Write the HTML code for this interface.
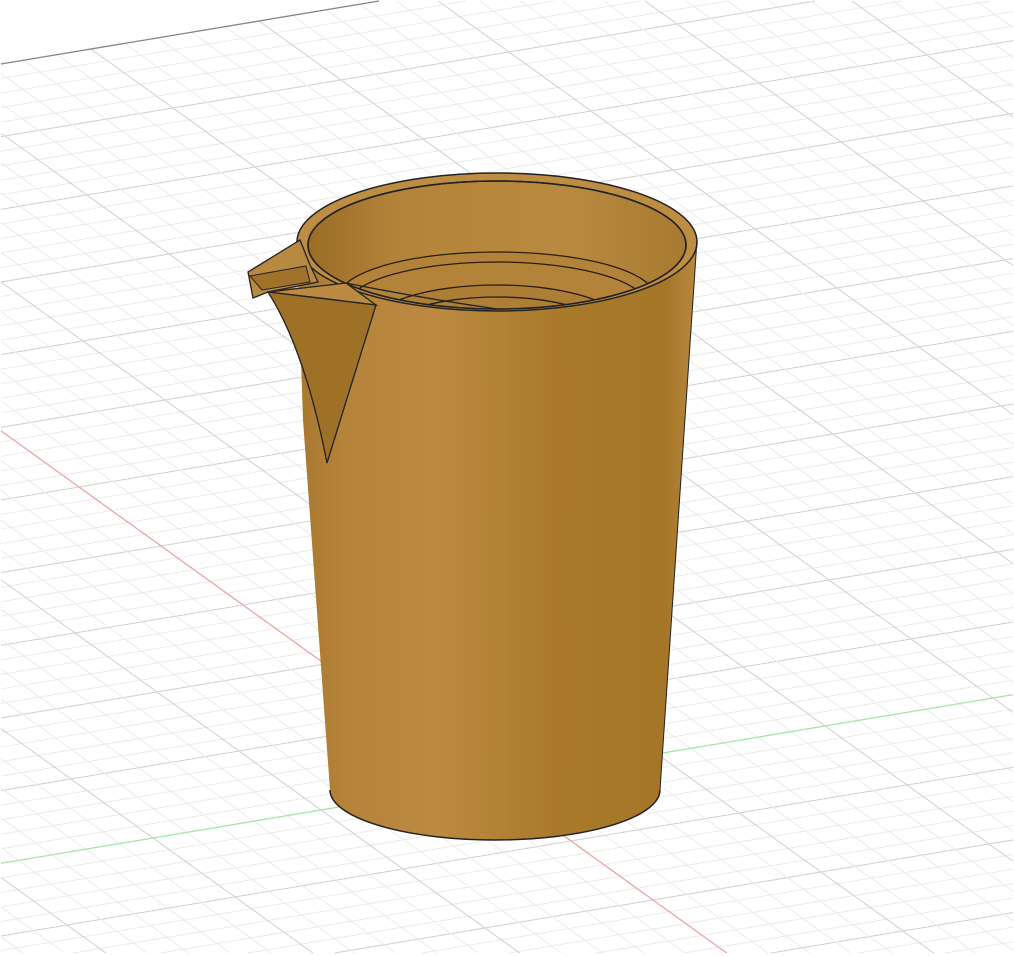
<!DOCTYPE html>
<html><head><meta charset="utf-8"><style>
html,body{margin:0;padding:0;background:#fff;width:1014px;height:956px;overflow:hidden}
svg{display:block;position:absolute;left:0;top:0;overflow:hidden}
</style></head><body>
<svg id="s" width="1014" height="956" viewBox="0 0 1014 956" xmlns="http://www.w3.org/2000/svg">
<defs>
<linearGradient id="body" x1="0" x2="1" y1="0" y2="0">
<stop offset="0" stop-color="#a8782e"/>
<stop offset="0.12" stop-color="#b5843a"/>
<stop offset="0.35" stop-color="#bb8a40"/>
<stop offset="0.65" stop-color="#aa7a2a"/>
<stop offset="0.92" stop-color="#a57628"/>
<stop offset="1" stop-color="#b8883e"/>
</linearGradient>
<linearGradient id="inner" x1="0" x2="1">
<stop offset="0" stop-color="#9a6d25"/>
<stop offset="0.25" stop-color="#b4843a"/>
<stop offset="0.7" stop-color="#b88a40"/>
<stop offset="1" stop-color="#a87a30"/>
</linearGradient>
<clipPath id="ic"><ellipse cx="497" cy="245" rx="189" ry="64"/></clipPath>
</defs>
<g id="grid"></g>
<path d="M297,240 L303,420 L330,790 A165,50 0 0 0 660,790 L697,240 Z" fill="url(#body)"/>
<path d="M330,790 A165,50 0 0 0 660,790" fill="none" stroke="#222" stroke-width="1.5"/>
<ellipse cx="497" cy="242" rx="200" ry="69" fill="#bd8d42" stroke="#222" stroke-width="1.5"/>
<ellipse cx="497" cy="245" rx="189" ry="64" fill="url(#inner)" stroke="#222" stroke-width="1.5"/>
<g clip-path="url(#ic)" fill="none" stroke="#2a1d08" stroke-width="1.3">
<ellipse cx="497" cy="297" rx="158" ry="45" fill="#b3833a"/>
<ellipse cx="497" cy="306" rx="150" ry="44"/>
<ellipse cx="497" cy="327" rx="128" ry="42" fill="#ad7e36"/>
<ellipse cx="497" cy="337" rx="117" ry="40"/>
</g>
<ellipse cx="497" cy="245" rx="189" ry="64" fill="none" stroke="#222" stroke-width="1.5"/>
<path d="M697,240 L660,790" stroke="#222" stroke-width="1" fill="none"/>
<path d="M300,240 L248,272 L253,298 L270,290 L346,283 L376,305 L327,463 Q300,340 268,292 Z" fill="#a87a30"/>
<path d="M248,272 L300,240 L310,265 L318,282 L268,292 L253,298 Z" fill="#b88a40" stroke="#222" stroke-width="1.3"/>
<path d="M250,276 L306,266 L310,282 L262,290 Z" fill="#a0722a" stroke="#222" stroke-width="1"/>
<path d="M268,292 L346,283 L376,305 L320,298 Z" fill="#b98a40" stroke="#222" stroke-width="1.3"/>
<path d="M268,292 L376,305 L327,463 Q305,350 268,292 Z" fill="#9f7127" stroke="#222" stroke-width="1.3"/>
<path d="M346,283 Q420,298 497,309" fill="none" stroke="#222" stroke-width="1.3"/>
</svg>
<script>
(function(){
var g=document.getElementById('grid'),ns='http://www.w3.org/2000/svg';
var O=[489,782],A=[168,-28],B=[82,59],W=1014,H=954;
function P(u,v){return [O[0]+u*A[0]+v*B[0],O[1]+u*A[1]+v*B[1]];}
function clip(p,q){var x0=p[0],y0=p[1],dx=q[0]-x0,dy=q[1]-y0,t0=0,t1=1;
var ps=[-dx,dx,-dy,dy],qs=[x0-1,W-1-x0,y0-1,H-1-y0];
for(var k=0;k<4;k++){if(ps[k]==0){if(qs[k]<0)return null;}else{var r=qs[k]/ps[k];if(ps[k]<0){if(r>t1)return null;if(r>t0)t0=r;}else{if(r<t0)return null;if(r<t1)t1=r;}}}
return [[x0+t0*dx,y0+t0*dy],[x0+t1*dx,y0+t1*dy]];}
function L(p,q,c,w){var s=clip(p,q);if(!s)return;var l=document.createElementNS(ns,'line');l.setAttribute('x1',s[0][0]);l.setAttribute('y1',s[0][1]);l.setAttribute('x2',s[1][0]);l.setAttribute('y2',s[1][1]);l.setAttribute('stroke',c);l.setAttribute('stroke-width',w);g.appendChild(l);}
var vmin=-11,vmax=6,umin=-6,umax=8;
for(var i=vmin*5;i<=vmax*5;i++){var v=i/5;var maj=i%5==0;L(P(umin,v),P(umax,v),maj?'#cfcfcf':'#ebebeb',1);}
for(var j=umin*5;j<=umax*5;j++){var u=j/5;var maj=j%5==0;L(P(u,vmin),P(u,vmax),maj?'#cfcfcf':'#ebebeb',1);}
L(P(umin,vmin),P(umax,vmin),'#888',1.3);
L(P(-6,0),P(umax,0),'#9fe89f',1.2);
L(P(0,-11),P(0,vmax),'#f0a0a0',1.2);
})();
</script>
</body></html>
